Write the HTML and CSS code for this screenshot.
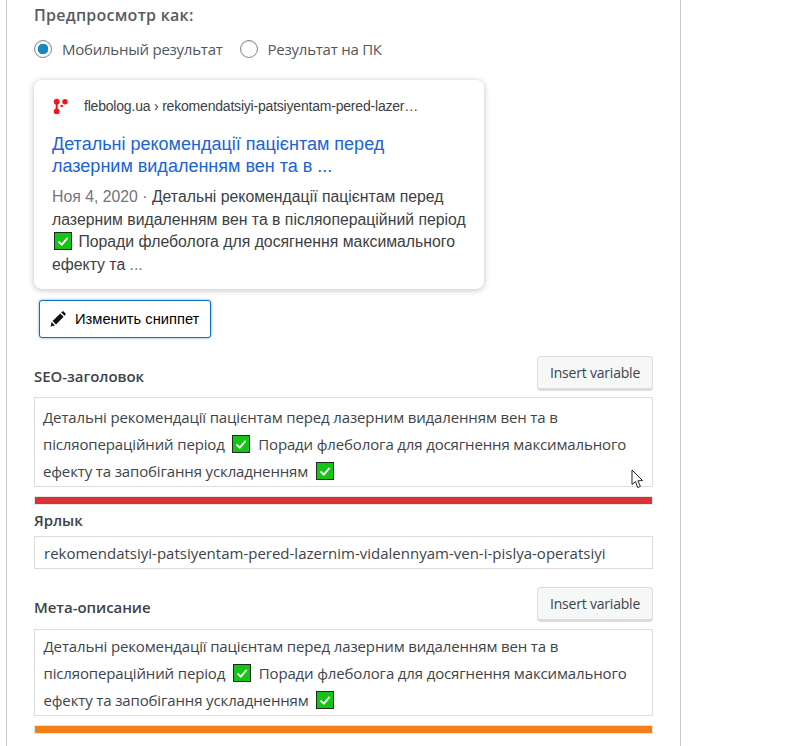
FILE: index.html
```html
<!DOCTYPE html>
<html lang="ru">
<head>
<meta charset="utf-8">
<title>Snippet preview</title>
<link rel="stylesheet" href="styles.css">
</head>
<body>
<svg class="defs" width="0" height="0" aria-hidden="true">
  <symbol id="check" viewBox="0 0 18 18">
    <rect x="0.5" y="0.5" width="17" height="17" fill="#15c414" stroke="#1f2b1f"/>
    <path d="M4.5 9.5 L7.8 12.6 L13.6 5.8" fill="none" stroke="#fff" stroke-width="1.8"/>
  </symbol>
</svg>
<main class="panel">
  <div class="preview-title">Предпросмотр как:</div>
  <div class="radios">
    <label class="radio"><span class="dot dot-on"></span>Мобильный результат</label>
    <label class="radio"><span class="dot"></span>Результат на ПК</label>
  </div>
  <section class="card">
    <div class="crumb">
      <svg class="favicon" viewBox="0 0 16 16" width="16" height="16" aria-hidden="true">
        <g fill="#f5141c"><circle cx="4.7" cy="3.7" r="2.9"/><circle cx="13" cy="3.7" r="2.7"/><circle cx="4.7" cy="13.4" r="2.9"/><circle cx="9.7" cy="8" r="1.3"/><rect x="3.7" y="4" width="2" height="9"/></g>
      </svg>
      <span class="crumb-text">flebolog.ua › rekomendatsiyi-patsiyentam-pered-lazer…</span>
    </div>
    <a class="snippet-title">Детальні рекомендації пацієнтам перед лазерним видаленням вен та в ...</a>
    <p class="snippet-text"><span class="date">Ноя 4, 2020 · </span>Детальні рекомендації пацієнтам перед лазерним видаленням вен та в післяопераційний період <svg class="emoji emoji-card"><use href="#check"/></svg> Поради флеболога для досягнення максимального ефекту та <span class="date">...</span></p>
  </section>
  <button class="edit-btn">
    <svg class="pencil" viewBox="0 0 16 16" width="16" height="16" aria-hidden="true"><path fill="#111" d="M0.6 15.4 L1.6 11 L5 14.4 Z M2.6 10 L10.2 2.4 L13.6 5.8 L6 13.4 Z M11.2 1.4 L12.2 0.5 Q12.9 0 13.6 0.5 L15.5 2.4 Q16 3.1 15.5 3.8 L14.6 4.8 Z"/></svg>
    Изменить сниппет
  </button>
  <div class="field-head head-seo">
    <span class="field-label head-label">SEO-заголовок</span>
    <button class="var-btn">Insert variable</button>
  </div>
  <div class="editor editor-seo">Детальні рекомендації пацієнтам перед лазерним видаленням вен та в післяопераційний період <svg class="emoji"><use href="#check"/></svg> Поради флеболога для досягнення максимального ефекту та запобігання ускладненням <svg class="emoji"><use href="#check"/></svg></div>
  <div class="bar bar-red"><span></span></div>
  <div class="field-label slug-label">Ярлык</div>
  <div class="slug">rekomendatsiyi-patsiyentam-pered-lazernim-vidalennyam-ven-i-pislya-operatsiyi</div>
  <div class="field-head head-meta">
    <span class="field-label head-label">Мета-описание</span>
    <button class="var-btn">Insert variable</button>
  </div>
  <div class="editor editor-meta">Детальні рекомендації пацієнтам перед лазерним видаленням вен та в післяопераційний період <svg class="emoji"><use href="#check"/></svg> Поради флеболога для досягнення максимального ефекту та запобігання ускладненням <svg class="emoji"><use href="#check"/></svg></div>
  <div class="bar bar-orange"><span></span></div>
  <svg class="cursor" viewBox="0 0 14 21" width="14" height="21" aria-hidden="true"><path d="M1 1 L1 15.5 L4.4 12.6 L6.8 18.6 L9.4 17.4 L6.9 11.8 L11.6 11.6 Z" fill="#fff" stroke="#222" stroke-width="1"/></svg>
</main>
</body>
</html>
```
FILE: styles.css
```css
html, body { margin: 0; padding: 0; background: #fff; }
body { height: 746px; overflow: hidden; font-family: "Open Sans", "Noto Sans", sans-serif; color: #444; }
.defs { position: absolute; }
.panel { position: relative; box-sizing: border-box; width: 675px; height: 746px; margin-left: 6px; padding: 5px 27px 0 27px; border-left: 1px solid #c8c8c8; border-right: 1px solid #c8c8c8; overflow: hidden; }
.preview-title { font-size: 16px; font-weight: 600; line-height: 20px; color: #555d62; letter-spacing: 0.25px; }
.radios { display: flex; gap: 17px; margin-top: 14px; height: 20px; }
.radio { display: flex; align-items: center; font-size: 15px; color: #50575e; letter-spacing: -0.24px; }
.dot { box-sizing: border-box; width: 18px; height: 18px; margin-right: 10px; border: 1px solid #7e8993; border-radius: 50%; background: #fff; box-shadow: inset 0 1px 2px rgba(0,0,0,.1); }
.dot-on { background: radial-gradient(circle, #1a87bd 0, #1a87bd 5px, #fff 5.6px); }
.card { box-sizing: border-box; width: 450px; height: 209px; margin-top: 21px; padding: 17px 18px 0; background: #fff; border-radius: 8px; box-shadow: 0 1px 6px rgba(32,33,36,.28); font-family: "Liberation Sans", Arial, sans-serif; }
.crumb { display: flex; align-items: center; height: 18px; }
.favicon { margin-right: 16px; flex: none; }
.crumb-text { font-size: 14px; letter-spacing: -0.2px; color: #3c4043; white-space: nowrap; }
.snippet-title { display: block; margin-top: 18px; font-size: 18px; line-height: 22px; color: #1a63d8; }
.snippet-text { margin: 9px 0 0; font-size: 15.8px; line-height: 22.5px; color: #3c4043; }
.date { color: #70757a; }
.emoji { width: 18px; height: 18px; vertical-align: -3px; margin: 0 4px; }
.emoji-card { margin: 0 2px; }
.edit-btn { display: flex; align-items: center; box-sizing: border-box; width: 172px; height: 38px; margin: 11px 0 0 5px; padding: 0 0 0 10px; gap: 9px; background: #fff; border: 1px solid #0c6fc2; border-radius: 3px; box-shadow: 0 0 3px rgba(12,111,194,.6); font: 14.7px "Liberation Sans", Arial, sans-serif; color: #000; }
.field-head { display: flex; align-items: center; justify-content: space-between; }
.head-seo { margin-top: 18px; }
.head-meta { margin-top: 18px; }
.field-label { font-size: 15px; font-weight: 600; color: #3c434a; letter-spacing: -0.05px; }
.head-label { padding-top: 5px; }
.var-btn { box-sizing: border-box; width: 116px; height: 35px; padding: 0; background: #f6f7f7; border: 1px solid #dcdcde; border-bottom: 3px solid #dcdcde; border-radius: 4px; font: 14px "Open Sans", sans-serif; letter-spacing: -0.2px; color: #3c434a; }
.editor { box-sizing: border-box; width: 619px; margin-top: 6px; padding: 5px 8px; border: 1px solid #ddd; font-size: 15px; line-height: 27px; letter-spacing: -0.14px; color: #3e444a; background: #fff; }
.editor-seo { height: 90px; padding-top: 6px; }
.editor-meta { height: 87px; margin-top: 7px; padding-top: 3px; padding-left: 8.5px; }
.bar { box-sizing: border-box; width: 619px; height: 9px; margin-top: 9px; border: 1px solid #e6e6e6; }
.bar span { display: block; height: 100%; }
.bar-red span { background: #dc3232; }
.bar-orange span { background: #f18019; }
.slug-label { margin-top: 5px; line-height: 20px; }
.slug { box-sizing: border-box; width: 619px; height: 33px; margin-top: 6px; padding: 0 9px; border: 1px solid #ddd; font-size: 15px; line-height: 32px; color: #3e444a; white-space: nowrap; overflow: hidden; }
.cursor { position: absolute; left: 624px; top: 469px; }
```
